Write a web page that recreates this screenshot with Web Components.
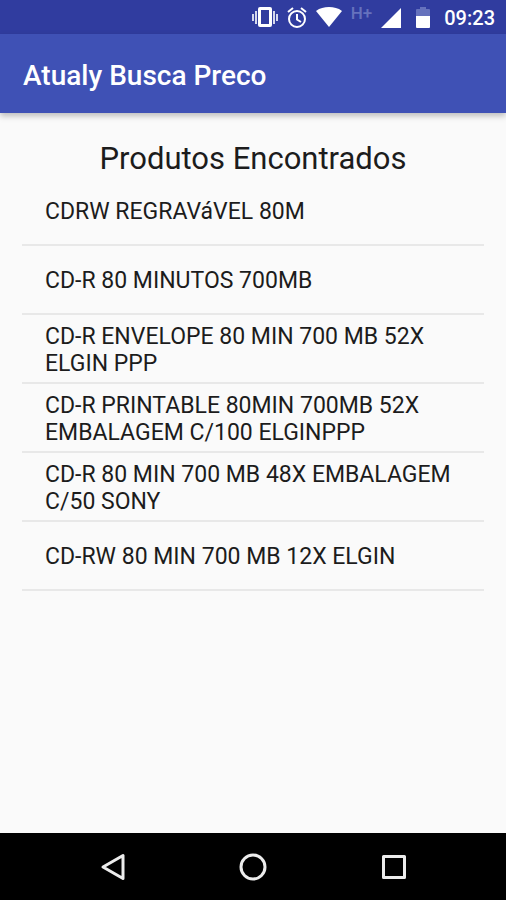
<!DOCTYPE html>
<html lang="pt-BR">
<head>
<meta charset="utf-8">
<meta name="viewport" content="width=device-width, initial-scale=1">
<title>Atualy Busca Preco</title>
<style>
body {
    margin: 0;
    background: #fafafa;
    color: #1c1c1c;
    font-family: Roboto, "Noto Sans", sans-serif;
}
</style>
</head>
<body>

<phone-screen>
    <status-bar slot="top" time="09:23"></status-bar>
    <app-bar slot="top">Atualy Busca Preco</app-bar>
    <product-list heading="Produtos Encontrados">
        <product-item>CDRW REGRAVáVEL 80M</product-item>
        <product-item>CD-R 80 MINUTOS 700MB</product-item>
        <product-item>CD-R ENVELOPE 80 MIN 700 MB 52X ELGIN PPP</product-item>
        <product-item>CD-R PRINTABLE 80MIN 700MB 52X EMBALAGEM C/100 ELGINPPP</product-item>
        <product-item>CD-R 80 MIN 700 MB 48X EMBALAGEM C/50 SONY</product-item>
        <product-item>CD-RW 80 MIN 700 MB 12X ELGIN</product-item>
    </product-list>
    <nav-bar slot="bottom"></nav-bar>
</phone-screen>

<script>
/**
 * Page frame: bars on top, content in the middle, navigation at the bottom.
 */
customElements.define(
  "phone-screen",
  class extends HTMLElement {
    constructor() {
      super();
      this.attachShadow({ mode: "open" });
      this.shadowRoot.innerHTML = /*html*/ `
<style>
:host {
    display: flex;
    flex-direction: column;
    min-height: 100vh;
}
main {
    flex: 1;
}
</style>
<slot name="top"></slot>
<main><slot></slot></main>
<slot name="bottom"></slot>
        `;
    }
  }
);

/**
 * Status icons and the clock.
 */
customElements.define(
  "status-bar",
  class extends HTMLElement {
    constructor() {
      super();
      this.attachShadow({ mode: "open" });
      this.shadowRoot.innerHTML = /*html*/ `
<style>
:host {
    display: flex;
    align-items: center;
    justify-content: flex-end;
    height: 34px;
    padding: 0 11px;
    background: #303c9f;
    color: #fff;
}
svg {
    display: block;
    fill: currentColor;
}
.vibrate, .alarm { margin-right: 9px; }
.wifi { margin-right: 9px; }
.network {
    align-self: flex-start;
    margin-right: 9px;
    font-size: 17px;
    line-height: 26px;
    font-weight: 500;
    color: #6672bd;
}
.signal { margin-right: 15px; }
.battery { margin-right: 14px; }
time {
    font-size: 20px;
    line-height: 34px;
    font-weight: 500;
    padding-top: 2px;
}
</style>
<svg class="vibrate" width="26" height="22" viewBox="0 0 26 22" aria-hidden="true">
    <path fill-opacity="0.8" d="M0 8h2v7H0zM3 5h2v13H3zM21 5h2v13h-2zM24 8h2v7h-2z"/>
    <path fill-rule="evenodd" d="M8 1h10q2 0 2 2v16q0 2-2 2H8q-2 0-2-2V3q0-2 2-2zM9 4v14h8V4z"/>
</svg>
<svg class="alarm" width="20" height="22" viewBox="0 0 20 22" aria-hidden="true">
    <g fill="none" stroke="currentColor" stroke-width="2">
        <circle cx="10" cy="13" r="8"/>
        <path d="M1 6L6 2M19 6L14 2M10 8v5.500l4 2.500"/>
    </g>
</svg>
<svg class="wifi" width="26" height="22" viewBox="0 0 26 22" aria-hidden="true">
    <path d="M13 21L0 5C4 2 8 1 13 1s9 1 13 4z"/>
</svg>
<span class="network">H+</span>
<svg class="signal" width="20" height="22" viewBox="0 0 20 22" aria-hidden="true">
    <path d="M20 2v20H0z"/>
</svg>
<svg class="battery" width="14" height="22" viewBox="0 0 14 22" aria-hidden="true">
    <path fill="#6672bd" d="M4 1h6v2h3q1 0 1 1v6H0V4q0-1 1-1h3z"/>
    <path d="M0 10h14v11q0 1-1 1H1q-1 0-1-1z"/>
</svg>
<time></time>
        `;
    }

    connectedCallback() {
      this.shadowRoot.querySelector("time").textContent = this.getAttribute("time");
    }
  }
);

customElements.define(
  "app-bar",
  class extends HTMLElement {
    constructor() {
      super();
      this.attachShadow({ mode: "open" });
      this.shadowRoot.innerHTML = /*html*/ `
<style>
:host {
    display: block;
    padding: 24px 23px 19px;
    background: #3f51b5;
    color: #fff;
    box-shadow: 0 3px 6px rgba(0, 0, 0, 0.25);
}
h1 {
    margin: 0;
    font-size: 28px;
    line-height: 36px;
    font-weight: 500;
}
</style>
<h1><slot></slot></h1>
        `;
    }
  }
);

customElements.define(
  "product-list",
  class extends HTMLElement {
    constructor() {
      super();
      this.attachShadow({ mode: "open" });
      this.shadowRoot.innerHTML = /*html*/ `
<style>
:host {
    display: block;
    padding: 27px 22px;
}
h2 {
    margin: 0;
    font-size: 31px;
    line-height: 37px;
    font-weight: 400;
    text-align: center;
}
</style>
<h2></h2>
<div role="list"><slot></slot></div>
        `;
    }

    connectedCallback() {
      this.shadowRoot.querySelector("h2").textContent = this.getAttribute("heading");
    }
  }
);

customElements.define(
  "product-item",
  class extends HTMLElement {
    constructor() {
      super();
      this.attachShadow({ mode: "open" });
      this.shadowRoot.innerHTML = /*html*/ `
<style>
:host {
    display: block;
    border-bottom: 2px solid #e8e8e8;
}
button {
    display: flex;
    align-items: center;
    width: 100%;
    min-height: 67px;
    padding: 2px 23px 0;
    border: 0;
    background: none;
    color: inherit;
    font: inherit;
    font-size: 23px;
    line-height: 27px;
    text-align: left;
    cursor: pointer;
}
</style>
<button type="button"><slot></slot></button>
        `;
    }

    connectedCallback() {
      this.setAttribute("role", "listitem");
    }
  }
);

/**
 * Back, home and recent apps.
 */
customElements.define(
  "nav-bar",
  class extends HTMLElement {
    constructor() {
      super();
      this.attachShadow({ mode: "open" });
      this.shadowRoot.innerHTML = /*html*/ `
<style>
nav {
    display: grid;
    grid-template-columns: repeat(3, 1fr);
    padding: 0 42px;
    background: #000;
}
button {
    display: flex;
    align-items: center;
    justify-content: center;
    height: 67px;
    padding: 0;
    border: 0;
    background: none;
    color: #ececec;
}
svg {
    fill: none;
    stroke: currentColor;
    stroke-width: 3;
    stroke-linejoin: round;
}
</style>
<nav>
    <button type="button" aria-label="Voltar">
        <svg width="28" height="28" viewBox="0 0 28 28"><path d="M25 2.500v23L5 14z"/></svg>
    </button>
    <button type="button" aria-label="Início">
        <svg width="28" height="28" viewBox="0 0 28 28"><circle cx="14" cy="14" r="12"/></svg>
    </button>
    <button type="button" aria-label="Recentes">
        <svg width="28" height="28" viewBox="0 0 28 28"><rect x="3.500" y="3.500" width="21" height="21"/></svg>
    </button>
</nav>
        `;
    }
  }
);
</script>
</body>
</html>
